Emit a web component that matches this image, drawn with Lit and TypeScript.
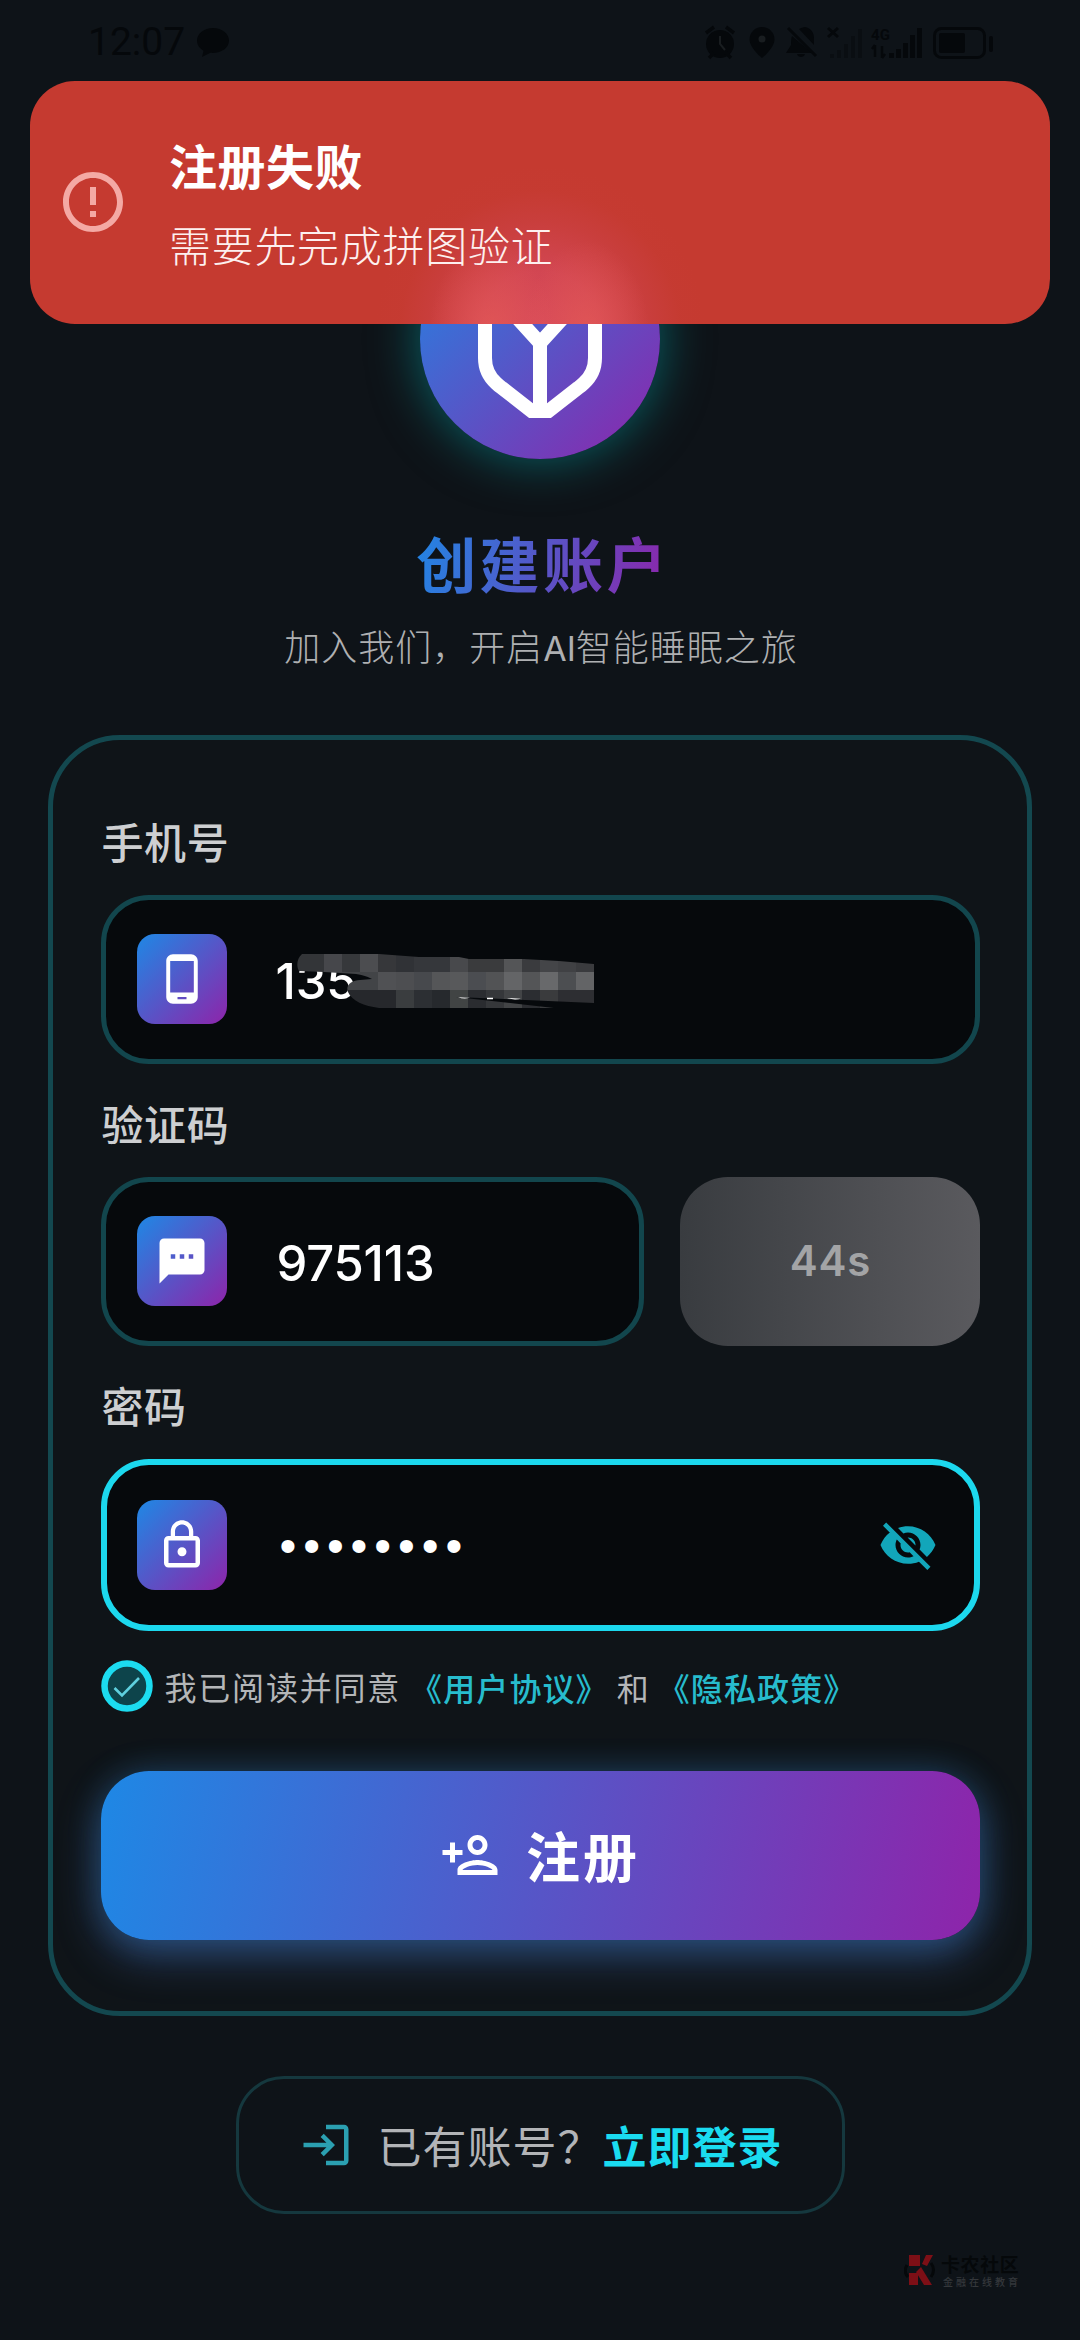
import { LitElement, html, svg, css } from "lit";
import { customElement, property } from "lit/decorators.js";

const ICONS: Record<string, string> = {
  phone:
    "M16 1H8C6.34 1 5 2.34 5 4v16c0 1.66 1.34 3 3 3h8c1.66 0 3-1.34 3-3V4c0-1.66-1.34-3-3-3zm-2 20h-4v-1h4v1zm3.25-3H6.75V4h10.5v14z",
  sms: "M20 2H4c-1.1 0-1.99.9-1.99 2L2 22l4-4h14c1.1 0 2-.9 2-2V4c0-1.1-.9-2-2-2zM9 11H7V9h2v2zm4 0h-2V9h2v2zm4 0h-2V9h2v2z",
  lock: "M12 17c1.1 0 2-.9 2-2s-.9-2-2-2-2 .9-2 2 .9 2 2 2zm6-9h-1V6c0-2.76-2.24-5-5-5S7 3.24 7 6v2H6c-1.1 0-2 .9-2 2v10c0 1.1.9 2 2 2h12c1.1 0 2-.9 2-2V10c0-1.1-.9-2-2-2zM8.9 6c0-1.71 1.39-3.1 3.1-3.1s3.1 1.39 3.1 3.1v2H8.9V6zM18 20H6V10h12v10z",
  eyeOff:
    "M12 7c2.76 0 5 2.24 5 5 0 .65-.13 1.26-.36 1.83l2.92 2.92c1.51-1.26 2.7-2.89 3.43-4.75-1.73-4.39-6-7.5-11-7.5-1.4 0-2.74.25-3.98.7l2.16 2.16C10.74 7.13 11.35 7 12 7zM2 4.27l2.28 2.28.46.46C3.08 8.3 1.78 10.02 1 12c1.73 4.39 6 7.5 11 7.5 1.55 0 3.03-.3 4.38-.84l.42.42L19.73 22 21 20.73 3.27 3 2 4.27zM7.53 9.8l1.55 1.55c-.05.21-.08.43-.08.65 0 1.66 1.34 3 3 3 .22 0 .44-.03.65-.08l1.55 1.55c-.67.33-1.41.53-2.2.53-2.76 0-5-2.24-5-5 0-.79.2-1.53.53-2.2zm4.31-.78l3.15 3.15.02-.16c0-1.66-1.34-3-3-3l-.17.01z",
  error:
    "M11 15h2v2h-2zm0-8h2v6h-2zm.99-5C6.47 2 2 6.48 2 12s4.47 10 9.99 10C17.52 22 22 17.52 22 12S17.52 2 11.99 2zM12 20c-4.42 0-8-3.58-8-8s3.58-8 8-8 8 3.58 8 8-3.58 8-8 8z",
  personAdd:
    "M15 12c2.21 0 4-1.79 4-4s-1.79-4-4-4-4 1.79-4 4 1.79 4 4 4zm0-6c1.1 0 2 .9 2 2s-.9 2-2 2-2-.9-2-2 .9-2 2-2zm0 8c-2.67 0-8 1.34-8 4v2h16v-2c0-2.66-5.33-4-8-4zm-6 4c.22-.72 3.31-2 6-2 2.7 0 5.8 1.29 6 2H9zm-3-3v-3h3v-2H6V7H4v3H1v2h3v3z",
  login:
    "M11 7L9.6 8.4l2.6 2.6H2v2h10.2l-2.6 2.6L11 17l5-5-5-5zm9 12h-8v2h8c1.1 0 2-.9 2-2V5c0-1.1-.9-2-2-2h-8v2h8v14z",
};

@customElement("app-icon")
export class AppIcon extends LitElement {
  @property() name = "";
  static styles = css`
    :host { display: block; flex: none; }
    .icon { display: block; width: 100%; height: 100%; fill: currentColor; }
  `;
  render() {
    return html`<svg class="icon" viewBox="0 0 24 24"><path d=${ICONS[this.name] ?? ""}></path></svg>`;
  }
}

/* Pixelated cover over the middle of the phone number: one row per 18px band, [x, width, colour]. */
const MOSAIC: Array<{ y: number; cells: Array<[number, number, string]> }> = [
  {
    y: 14,
    cells: [
      [30, 30, "#333538"], [60, 18, "#46474b"], [78, 18, "#36383b"], [96, 18, "#4c4d50"],
      [114, 18, "#36373a"], [132, 18, "#303236"], [150, 36, "#35373b"], [186, 18, "#48494c"],
      [204, 36, "#3a3b3d"], [240, 18, "#545557"], [258, 18, "#3a3b3e"], [276, 18, "#444548"],
      [294, 18, "#404144"], [312, 18, "#3a3b3e"],
    ],
  },
  {
    y: 32,
    cells: [
      [30, 84, "#424447"], [114, 18, "#505154"], [132, 18, "#4d4e51"], [150, 18, "#47494d"],
      [168, 18, "#555658"], [186, 18, "#58595b"], [204, 18, "#4b4d51"], [222, 18, "#525355"],
      [240, 18, "#646567"], [258, 18, "#545557"], [276, 18, "#68696b"], [294, 18, "#4c4e51"],
      [312, 18, "#636466"],
    ],
  },
  {
    y: 50,
    cells: [
      [80, 52, "#26282c"], [132, 18, "#3a3d3f"], [150, 18, "#2c2f33"], [168, 18, "#26292d"],
      [186, 18, "#414444"], [204, 18, "#2a2c30"], [222, 18, "#35373a"], [240, 18, "#424446"],
      [258, 18, "#2b2d31"], [276, 18, "#3a3b3d"], [294, 36, "#2d2e32"],
    ],
  },
];

@customElement("app-root")
export class AppRoot extends LitElement {
  static styles = css`
    :host { display: block; }
    * { box-sizing: border-box; }
    .page {
      position: relative;
      width: 1080px;
      height: 2340px;
      overflow: hidden;
      display: flex;
      flex-direction: column;
      align-items: center;
      background: #0e1318;
      font-family: "Noto Sans CJK SC", "Noto Sans", sans-serif;
      color: #fff;
      white-space: nowrap;
    }
    .status {
      align-self: stretch;
      flex: none;
      height: 84px;
      padding: 0 86px 0 88px;
      display: flex;
      align-items: center;
      justify-content: space-between;
      color: #05080b;
    }
    .clock { display: flex; align-items: center; gap: 12px; font: 400 39px/44px Roboto, sans-serif; }
    .bubble { width: 32px; height: 31px; display: block; }
    .tray { width: 292px; height: 36px; display: block; }
    .tray-label { font: 700 15px Roboto, sans-serif; }

    .logo {
      flex: none;
      width: 240px;
      height: 240px;
      margin-top: 135px;
      border-radius: 50%;
      background: linear-gradient(135deg, #1e88e5, #8e24aa);
      box-shadow: 0 0 50px rgba(0, 185, 190, 0.5);
    }
    .logo-mark { display: block; width: 240px; height: 240px; }
    .title {
      flex: none;
      height: 72px;
      margin-top: 67px;
      padding-left: 6px;
      font-size: 60px;
      line-height: 72px;
      font-weight: 700;
      letter-spacing: 3.4px;
      background: linear-gradient(106deg, #1e88e5, #8e24aa);
      -webkit-background-clip: text;
      background-clip: text;
      color: transparent;
    }
    .subtitle {
      flex: none;
      height: 50px;
      margin-top: 22px;
      padding-left: 2px;
      font-size: 36px;
      line-height: 50px;
      font-weight: 300;
      letter-spacing: 1px;
      color: #aeb0b2;
    }
    .latin { font-family: Inter, sans-serif; font-weight: 400; font-size: 34px; line-height: 1; letter-spacing: 0; }

    .card {
      flex: none;
      width: 984px;
      height: 1280.5px;
      margin-top: 65px;
      padding: 73px 47.5px 0;
      border: 5px solid #13484f;
      border-radius: 72px;
      display: flex;
      flex-direction: column;
      background: #0f1418;
    }
    .label {
      flex: none;
      height: 56px;
      margin-bottom: 26px;
      padding-left: 1px;
      font-size: 42px;
      line-height: 56px;
      font-weight: 500;
      letter-spacing: 0.6px;
      color: #cdcfd1;
    }
    .field {
      position: relative;
      flex: none;
      height: 168.5px;
      margin-bottom: 31.5px;
      padding: 0 31px;
      border: 5px solid #12464d;
      border-radius: 48px;
      background: #06090c;
      display: flex;
      align-items: center;
    }
    .field.focus {
      height: 172px;
      margin-bottom: 29px;
      padding: 0 36px 0 30px;
      border: 6px solid #1cd8ee;
    }
    .tile {
      flex: none;
      width: 90px;
      height: 90px;
      margin-right: 49px;
      border-radius: 18px;
      background: linear-gradient(135deg, #1e88e5, #8e24aa);
      display: grid;
      place-items: center;
    }
    .tile-icon { width: 54px; height: 54px; }
    .value {
      flex: 1;
      font: 500 49px/60px Inter, sans-serif;
      letter-spacing: -0.2px;
      padding-top: 5px;
    }
    .value.code { padding-left: 1px; }
    .mask { position: absolute; left: 158.5px; top: 40px; width: 350px; height: 80px; }
    .dots {
      flex: 1;
      font: 400 48px/60px "Liberation Sans", sans-serif;
      letter-spacing: 6.9px;
      padding: 2px 0 0 4px;
    }
    .eye { width: 60px; height: 60px; color: #12a6ba; }
    .code-row { display: grid; grid-template-columns: 543px 300px; column-gap: 36px; }
    .countdown {
      height: 168.5px;
      padding-left: 2px;
      border-radius: 48px;
      display: grid;
      place-items: center;
      background: linear-gradient(90deg, #393c40, #5a5a5e);
      color: #a3a4a6;
      font: 600 42px/50px Inter, sans-serif;
      letter-spacing: 0.8px;
    }

    .agree { display: flex; align-items: center; height: 52px; font-size: 32px; letter-spacing: 1.5px; color: #b4b6b8; }
    .check { flex: none; width: 52px; height: 52px; margin-right: 12px; display: block; }
    .agree-text { line-height: 48px; letter-spacing: 1.8px; }
    .agree-link { padding-top: 3px; line-height: 49px; font-weight: 500; letter-spacing: 1.1px; color: #27bccd; }
    .agree-link.first { margin-left: 9px; }
    .agree-and { margin: 0 8px 0 8px; padding-top: 3px; line-height: 49px; letter-spacing: 1px; }

    .submit {
      flex: none;
      height: 168.5px;
      margin-top: 59px;
      border-radius: 48px;
      background: linear-gradient(101deg, #1e88e5, #8e24aa);
      box-shadow: 0 0 34px rgba(40, 160, 230, 0.2), 0 16px 44px rgba(76, 122, 210, 0.48);
      display: flex;
      align-items: center;
      justify-content: center;
      gap: 26px;
      font-size: 54px;
      line-height: 66px;
      font-weight: 700;
      letter-spacing: 3px;
    }
    .submit-icon { width: 60px; height: 60px; }

    .login {
      flex: none;
      width: 609px;
      height: 138px;
      margin-top: 60.5px;
      padding-left: 60px;
      border: 3px solid #15383e;
      border-radius: 48px;
      display: flex;
      align-items: center;
      font-size: 44px;
      letter-spacing: 1px;
      color: #b2b4b7;
      font-weight: 400;
    }
    .login-icon { width: 54px; height: 54px; margin-right: 25px; color: #2ba0b1; }
    .login-link { color: #1adcf0; font-weight: 700; }

    .toast {
      position: absolute;
      left: 30px;
      top: 81px;
      width: 1020px;
      height: 242.5px;
      padding-left: 27px;
      border-radius: 45px;
      background:
        radial-gradient(62px 90px at 461px 250px, rgba(232, 94, 88, 0.6), rgba(232, 94, 88, 0.3) 50%, rgba(232, 94, 88, 0)),
        radial-gradient(62px 90px at 557px 250px, rgba(232, 94, 88, 0.6), rgba(232, 94, 88, 0.3) 50%, rgba(232, 94, 88, 0)),
        radial-gradient(165px 165px at 510px 250px, rgba(216, 74, 92, 0.95), rgba(213, 73, 90, 0.82) 36%, rgba(206, 68, 78, 0.42) 66%, rgba(200, 62, 60, 0.12) 85%, rgba(197, 58, 48, 0)),
        #c53a30;
      display: flex;
      align-items: center;
    }
    .toast-icon { width: 72px; height: 72px; margin-right: 40px; color: #f4a9a4; }
    .toast-body { display: flex; flex-direction: column; }
    .toast-title { font-size: 48px; line-height: 64px; font-weight: 700; letter-spacing: 0.5px; }
    .toast-text { margin-top: 20px; font-size: 42px; line-height: 56px; font-weight: 300; letter-spacing: 0.7px; color: #fdf0ef; }

    .mark { position: absolute; left: 904px; top: 2252px; display: flex; align-items: center; gap: 5px; }
    .mark-logo { display: block; width: 32px; height: 36px; }
    .mark-text { display: flex; flex-direction: column; }
    .mark-name { font-size: 19px; line-height: 19px; font-weight: 700; letter-spacing: 0.6px; color: #05080a; }
    .mark-sub { margin-top: 3px; font-size: 10px; line-height: 11px; font-weight: 500; letter-spacing: 3px; padding-left: 2px; color: #34373b; }
  `;

  private statusBar() {
    return html`
      <div class="status">
        <div class="clock">
          <span>12:07</span>
          <svg class="bubble" viewBox="0 0 32 31">
            <path fill="currentColor" d="M16 1C7 1 0 6.600 0 13.500c0 4.600 2.800 8 6.500 10.200L5 30l8.500-4.200c10.500.8 18.500-4.600 18.500-12.300C32 6.600 25 1 16 1z"></path>
          </svg>
        </div>
        <svg class="tray" viewBox="0 0 292 36" fill="currentColor">
          <circle cx="18" cy="20" r="14"></circle>
          <path d="M4 9l8-6M32 9l-8-6M7 34l5-5M29 34l-5-5" stroke="currentColor" stroke-width="3.500"></path>
          <path d="M18 12v8l5 6" fill="none" stroke="#191d20" stroke-width="2"></path>
          <path d="M60 3c-7 0-12.500 5.500-12.500 12.500C47.500 24 60 34 60 34s12.500-10 12.500-18.500C72.500 8.500 67 3 60 3z"></path>
          <circle cx="60" cy="15" r="3.500" fill="#191d20"></circle>
          <path d="M90 12c-1 3-1 5-1 9l-5 8h26zM97 5c2-1 4-2 6-2 6 1 9 6 9 11v7z"></path>
          <path d="M95 30h8c-1 4-7 4-8 0z"></path>
          <path d="M86 4l28 28" stroke="currentColor" stroke-width="3"></path>
          <path d="M126 4l10 9M136 4l-10 9" stroke="currentColor" stroke-width="3"></path>
          <g fill="#0a0e12">
            <rect x="128" y="30" width="4" height="4"></rect><rect x="135" y="26" width="4" height="8"></rect>
            <rect x="142" y="20" width="4" height="14"></rect><rect x="149" y="12" width="4" height="22"></rect>
            <rect x="156" y="5" width="4" height="29"></rect>
          </g>
          <text class="tray-label" x="169" y="16" textLength="19">4G</text>
          <path d="M173 21v12M173 21l-3 4M180 22v12M180 34l3-4" stroke="currentColor" stroke-width="2.500"></path>
          <rect x="187" y="29" width="5" height="5"></rect><rect x="194" y="25" width="5" height="9"></rect>
          <rect x="201" y="19" width="5" height="15"></rect><rect x="208" y="11" width="5" height="23"></rect>
          <rect x="215" y="4" width="5" height="30"></rect>
          <rect x="232.500" y="4.500" width="50" height="29" rx="7" fill="none" stroke="currentColor" stroke-width="3"></rect>
          <rect x="237" y="9" width="26" height="20" rx="2"></rect>
          <rect x="287" y="12" width="4" height="16" rx="2"></rect>
        </svg>
      </div>
    `;
  }

  private phoneMask() {
    return html`
      <svg class="mask" viewBox="0 0 350 80">
        <defs>
          <clipPath id="stroke">
            <path d="M38 14L115 14L155 17L195 17L205 19L260 19L295 21L330 24L330 63L192 57L290 68L115 68C100 66 88 61 84 52C81 45 88 40 96 40L108 39C102 36 98 35 92 34L60 32L35 31C32 26 33 18 38 14Z"></path>
          </clipPath>
        </defs>
        <g clip-path="url(#stroke)" shape-rendering="crispEdges">
          ${MOSAIC.map((row) =>
            row.cells.map(
              ([x, w, fill]) => svg`<rect x=${x} y=${row.y} width=${w} height="18" fill=${fill}></rect>`
            )
          )}
        </g>
        <path fill="#fff" d="M194 57.300L206 57.800Q200 59.600 194 57.300zM223 57.800h6v1.500h-6zM243 58L257 58.700Q250 60.600 243 58z"></path>
      </svg>
    `;
  }

  render() {
    return html`
      <div class="page">
        ${this.statusBar()}
        <div class="logo">
          <svg class="logo-mark" viewBox="0 0 240 240" fill="none" stroke="#fff" stroke-width="14">
            <path d="M65 72V139Q65 154 76 164Q79 167 82 169L111.500 192H128.500L158 169Q161 167 164 164Q175 154 175 139V72L120 50Z"></path>
            <path d="M78 78L120 124L162 78M120 124V192"></path>
          </svg>
        </div>
        <div class="title">创建账户</div>
        <div class="subtitle">加入我们，开启<span class="latin">AI</span>智能睡眠之旅</div>

        <div class="card">
          <div class="label">手机号</div>
          <div class="field">
            <div class="tile"><app-icon class="tile-icon" name="phone"></app-icon></div>
            <div class="value">135</div>
            ${this.phoneMask()}
          </div>
          <div class="label">验证码</div>
          <div class="code-row">
            <div class="field">
              <div class="tile"><app-icon class="tile-icon" name="sms"></app-icon></div>
              <div class="value code">975113</div>
            </div>
            <div class="countdown">44s</div>
          </div>
          <div class="label">密码</div>
          <div class="field focus">
            <div class="tile"><app-icon class="tile-icon" name="lock"></app-icon></div>
            <div class="dots">••••••••</div>
            <app-icon class="eye" name="eyeOff"></app-icon>
          </div>
          <div class="agree">
            <svg class="check" viewBox="0 0 52 52" fill="none">
              <circle cx="26" cy="26" r="22.500" fill="#0d444b" stroke="#1cdcf0" stroke-width="6.500"></circle>
              <path d="M13.500 28L21 35.500L38 18" stroke="#5fd0de" stroke-width="2.600"></path>
            </svg>
            <span class="agree-text">我已阅读并同意</span>
            <span class="agree-link first">《用户协议》</span>
            <span class="agree-and">和</span>
            <span class="agree-link">《隐私政策》</span>
          </div>
          <div class="submit">
            <app-icon class="submit-icon" name="personAdd"></app-icon>
            <span>注册</span>
          </div>
        </div>

        <div class="login">
          <app-icon class="login-icon" name="login"></app-icon>
          <span>已有账号？</span><span class="login-link">立即登录</span>
        </div>

        <div class="toast">
          <app-icon class="toast-icon" name="error"></app-icon>
          <div class="toast-body">
            <div class="toast-title">注册失败</div>
            <div class="toast-text">需要先完成拼图验证</div>
          </div>
        </div>

        <div class="mark">
          <svg class="mark-logo" viewBox="0 0 32 36">
            <path d="M3 13Q-1 20 4 25M27 11Q32 18 27 25" fill="none" stroke="#05080a" stroke-width="3"></path>
            <path d="M5 3h11v11H5zM5 21h9v12H5zM18 12l4-9h7l-6 11zM12 20l5-5 11 18h-8z" fill="#7d0f16"></path>
          </svg>
          <div class="mark-text">
            <div class="mark-name">卡农社区</div>
            <div class="mark-sub">金融在线教育</div>
          </div>
        </div>
      </div>
    `;
  }
}
